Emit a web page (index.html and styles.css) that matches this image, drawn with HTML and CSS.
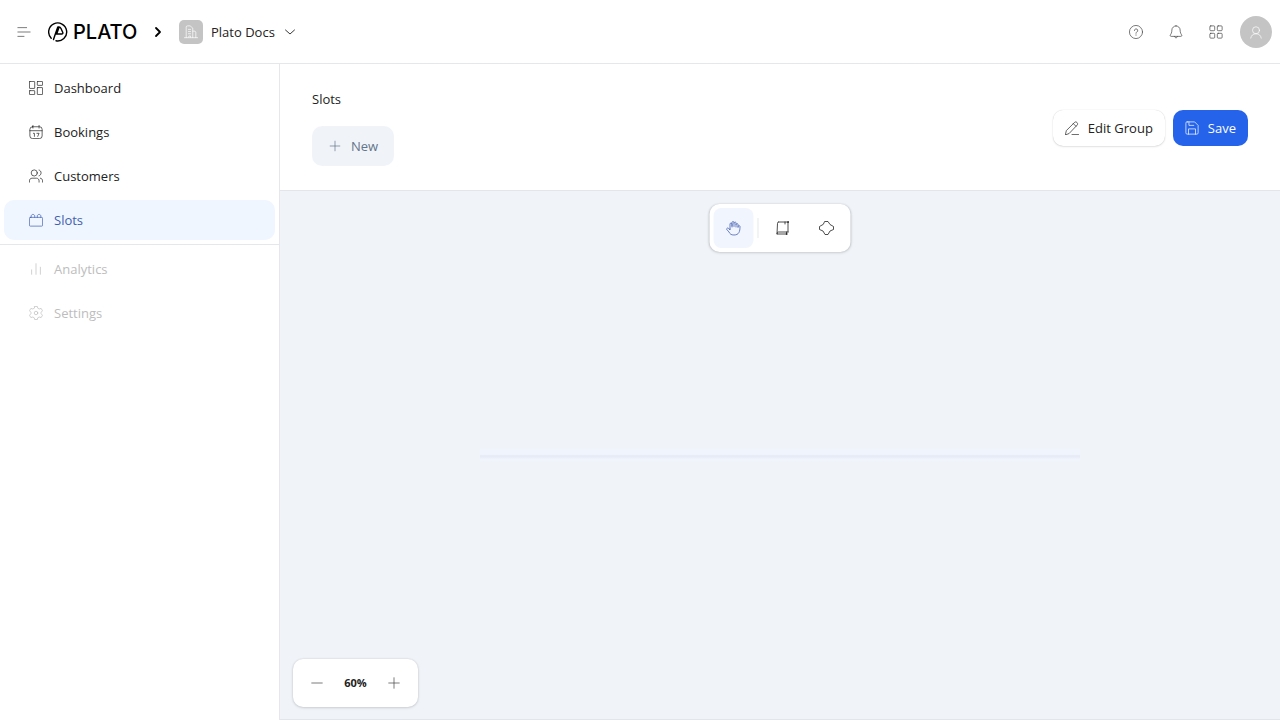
FILE: index.html
```html
<!DOCTYPE html>
<html lang="en">
<head>
<meta charset="utf-8">
<title>Plato - Slots</title>
<link rel="stylesheet" href="styles.css">
</head>
<body>

<header class="topbar">
	<button class="icon_btn" aria-label="Menu">
		<svg class="icon" viewBox="0 0 16 16"><path d="M1 3h10M1 8h14M1 13h7"/></svg>
	</button>
	<a class="brand" href="#">
		<svg class="brand_mark" viewBox="0 0 20 20"><path d="M3.200 16.200A9 9 0 1 1 8 18.800"/><path d="M5.500 17.500L7.500 11.500 9.800 5h1.200c1 0 1.500.5 2 1.500l1.800 4c.3 1-.2 1.500-1 1.500H7.500M11 5.500L9 11"/></svg>
		<span class="brand_name">PLATO</span>
	</a>
	<svg class="crumb" viewBox="0 0 8 12"><path d="M2 2L6 6l-4 4"/></svg>
	<button class="workspace">
		<span class="workspace_logo"><svg class="icon" viewBox="0 0 16 16"><path d="M.5 14.500h15M2.500 14.500V2.500c0-1 .5-1.500 1.500-1.500h3l3 2.500v11M10 7h2.500l1 1v6.500M5 5h2.500M5 7.500h2.500M5 10h2.500M5.500 14v-1.500h2V14"/></svg></span>
		Plato Docs
		<svg class="chevron" viewBox="0 0 12 8"><path d="M1.500 2L6 6l4.500-4"/></svg>
	</button>
	<div class="topbar_right">
		<button class="icon_btn" aria-label="Help">
			<svg class="icon" viewBox="0 0 16 16"><circle cx="8" cy="8" r="7.500"/><path d="M6.200 6.300a1.900 1.900 0 1 1 2.800 1.700c-.7.400-1 .7-1 1.500M8 11.200v.5"/></svg>
		</button>
		<button class="icon_btn" aria-label="Notifications">
			<svg class="icon" viewBox="0 0 16 16"><path d="M8 1a4.700 4.700 0 0 0-4.700 4.700c0 3.300-1.100 4.600-2 6 0 .9.400 1.300 1.200 1.300h11c.8 0 1.200-.4 1.200-1.300-.9-1.400-2-2.700-2-6A4.700 4.700 0 0 0 8 1zM6.300 13c.2 2.300 3.200 2.300 3.400 0"/></svg>
		</button>
		<button class="icon_btn" aria-label="Apps">
			<svg class="icon" viewBox="0 0 16 16"><rect x="1" y="1" width="5.500" height="5.500" rx="1"/><rect x="9.500" y="1" width="5.500" height="5.500" rx="1"/><rect x="1" y="9.500" width="5.500" height="5.500" rx="1"/><rect x="9.500" y="9.500" width="5.500" height="5.500" rx="1"/></svg>
		</button>
		<button class="avatar" aria-label="Account">
			<svg class="icon" viewBox="0 0 16 16"><circle cx="8" cy="6" r="4"/><path d="M2 15c.5-3 2.500-5 6-5s5.500 2 6 5"/></svg>
		</button>
	</div>
</header>

<div class="layout">
	<nav class="sidebar">
		<div class="nav_group">
			<a class="nav_item" href="#">
				<svg class="icon" viewBox="0 0 16 16"><rect x=".5" y=".5" width="6" height="8" rx=".5"/><rect x="9.500" y=".5" width="6" height="4.500" rx=".5"/><rect x=".5" y="11" width="6" height="4.500" rx=".5"/><rect x="9.500" y="7.500" width="6" height="8" rx=".5"/></svg>
				Dashboard
			</a>
			<a class="nav_item" href="#">
				<svg class="icon" viewBox="0 0 16 16"><rect x="1" y="2" width="14" height="13.500" rx="3"/><path d="M1 6.500h14M4.500 .5v3M11.500 .5v3M5 9.500h1.200v3.500M9 9.500h2.500l-1.500 3.500"/></svg>
				Bookings
			</a>
			<a class="nav_item" href="#">
				<svg class="icon" viewBox="0 0 16 16"><circle cx="6" cy="4.500" r="3.500"/><path d="M.5 15v-1.500c0-1.500 1-3 3-3h5c2 0 3 1.500 3 3V15M11.500 1.200c3.200.5 3.200 6 0 6.600M13 10.500c1.700.3 2.500 1.500 2.500 3V15"/></svg>
				Customers
			</a>
			<a class="nav_item active" href="#">
				<svg class="icon" viewBox="0 0 16 16"><rect x=".5" y="5" width="15" height="10" rx="1"/><path d="M2.500 5V3.500c0-2.500 4-2.500 4 0V5M9.500 5V3.500c0-2.500 4-2.500 4 0V5"/></svg>
				Slots
			</a>
		</div>
		<div class="nav_group">
			<a class="nav_item disabled" href="#">
				<svg class="icon" viewBox="0 0 16 16"><path d="M3 14V9M8 14V2M13 14V6"/></svg>
				Analytics
			</a>
			<a class="nav_item disabled" href="#">
				<svg class="icon" viewBox="0 0 16 16"><path d="M6.500 .5h3l.5 2 1.600.9 2.300-.6 1.500 2.600L13.800 7.300v1.400l1.600 1.900-1.500 2.600-2.300-.6-1.600.9-.5 2h-3L6 13.500l-1.600-.9-2.300.6L.6 10.600l1.600-1.900V7.300L.6 5.400l1.500-2.600 2.300.6L6 2.500z"/><circle cx="8" cy="8" r="2"/></svg>
				Settings
			</a>
		</div>
	</nav>

	<main class="content">
		<section class="page_head">
			<div class="page_title">
				<h1>Slots</h1>
				<button class="btn_new">
					<svg class="icon" viewBox="0 0 16 16"><path d="M8 2.500v11M2.500 8h11"/></svg>
					New
				</button>
			</div>
			<div class="actions">
				<button class="btn">
					<svg class="icon" viewBox="0 0 16 16"><path d="M.5 15.500l1-4.500 9.500-9.500c1.500-1.500 4.500 1 3 3L5 14zM9.500 3l3 3M8 15.500h7.500"/></svg>
					Edit Group
				</button>
				<button class="btn primary">
					<svg class="icon" viewBox="0 0 16 16"><path d="M2.500 1h8.500L15 5v8.500c0 1-.5 1.500-1.500 1.500h-11C1.500 15 1 14.500 1 13.500v-11C1 1.500 1.500 1 2.500 1zM4.500 1v4H10M4 15V9h8v6"/></svg>
					Save
				</button>
			</div>
		</section>

		<section class="canvas">
			<div class="slot_line"></div>
			<div class="panel tools">
				<button class="tool selected" aria-label="Pan">
					<svg class="icon large" viewBox="0 0 16 16"><path d="M4.500 9V4c0-1.300 2-1.300 2 0v3M6.500 6V2.500c0-1.300 2-1.300 2 0V6.500M8.500 3c0-1.300 2-1.300 2 0v4M10.500 4.500c0-1.300 2-1.300 2 0v3M12.500 6.500c0-1.200 2-1.200 2 0 0 5-1 8.500-6 8.500-3 0-4-1-5-3L1.300 9.500C.8 8 2.500 7.500 3.200 8.500L4.500 10V9"/></svg>
				</button>
				<span class="tools_sep"></span>
				<button class="tool" aria-label="Rectangle">
					<svg class="icon large" viewBox="0 0 16 16"><path d="M4 2h9.500v10M4 2c-.8 0-1 .7-1 1.500L2.500 14H12M2.500 14c0-1.500.5-2 1.500-2h9.500M10.500 2v2M12 12v2"/><circle cx="13.500" cy="2" r=".5"/><circle cx="12" cy="14" r=".5"/></svg>
				</button>
				<button class="tool" aria-label="Polygon">
					<svg class="icon large" viewBox="0 0 16 16"><path d="M6.500 1.500h3L11.500 4.500 15 6.500v3L11.500 11l-2 3.500h-3L4.500 11 1 9.500v-3L4.500 4.500z"/></svg>
				</button>
			</div>
			<div class="panel zoom">
				<button class="tool muted" aria-label="Zoom out">
					<svg class="icon" viewBox="0 0 16 16"><path d="M2 8h12"/></svg>
				</button>
				<span class="zoom_value">60%</span>
				<button class="tool muted" aria-label="Zoom in">
					<svg class="icon" viewBox="0 0 16 16"><path d="M8 2v12M2 8h12"/></svg>
				</button>
			</div>
		</section>
	</main>
</div>

</body>
</html>
```
FILE: styles.css
```css
* {
	box-sizing: border-box;
}
body {
	margin: 0;
	min-height: 100vh;
	display: flex;
	flex-direction: column;
	font-family: "Open Sans", sans-serif;
	font-size: 13px;
	line-height: 20px;
	color: #222;
	background: #fff;
}
a {
	color: inherit;
	text-decoration: none;
}
button {
	display: flex;
	align-items: center;
	justify-content: center;
	padding: 0;
	border: 0;
	background: none;
	font: inherit;
	color: inherit;
	cursor: pointer;
}
svg {
	flex: none;
	fill: none;
	stroke: currentColor;
	stroke-linecap: round;
	stroke-linejoin: round;
}
.icon {
	width: 14px;
	height: 14px;
	stroke-width: 0.8;
}
.icon.large {
	width: 16px;
	height: 16px;
}

/* top bar */
.topbar {
	display: flex;
	align-items: center;
	height: 64px;
	padding: 0 8px 0 4px;
	border-bottom: 1px solid #e5e7eb;
}
.icon_btn {
	width: 40px;
	height: 40px;
	color: #444;
}
.brand {
	display: flex;
	align-items: center;
	gap: 5px;
	margin-left: 4px;
	width: 96px;
	color: #000;
}
.brand_mark {
	width: 20px;
	height: 20px;
	stroke-width: 1.4;
}
.brand_name {
	font-family: Inter, sans-serif;
	font-size: 20px;
	font-weight: 500;
}
.crumb {
	width: 8px;
	height: 12px;
	margin-left: 10px;
	color: #000;
	stroke-width: 1.8;
}
.workspace {
	gap: 8px;
	margin-left: 17px;
}
.workspace_logo {
	display: flex;
	align-items: center;
	justify-content: center;
	width: 24px;
	height: 24px;
	border-radius: 5px;
	background: #c4c4c4;
	color: #fff;
}
.chevron {
	width: 12px;
	height: 8px;
	margin-left: 1px;
	stroke-width: 0.9;
}
.topbar_right {
	display: flex;
	align-items: center;
	margin-left: auto;
}
.avatar {
	width: 32px;
	height: 32px;
	margin-left: 4px;
	border-radius: 50%;
	background: #c4c4c4;
	color: #fff;
}

/* sidebar */
.layout {
	flex: 1;
	display: flex;
}
.sidebar {
	flex: none;
	width: 280px;
	border-right: 1px solid #e5e7eb;
}
.nav_group {
	display: flex;
	flex-direction: column;
	gap: 4px;
	padding: 4px;
}
.nav_group + .nav_group {
	border-top: 1px solid #e5e7eb;
}
.nav_item {
	display: flex;
	align-items: center;
	gap: 11px;
	height: 40px;
	padding: 0 25px;
	border-radius: 10px;
}
.nav_item.active {
	background: #eff6ff;
	color: #3f5fb0;
}
.nav_item.disabled {
	color: #bdbdbd;
}

/* page head */
.content {
	flex: 1;
	display: flex;
	flex-direction: column;
}
.page_head {
	display: flex;
	align-items: center;
	justify-content: space-between;
	padding: 25px 32px 24px;
	border-bottom: 1px solid #e2e6eb;
}
.page_title h1 {
	margin: 0 0 17px;
	font-size: 13px;
	font-weight: 400;
	line-height: 20px;
}
.btn_new {
	gap: 9px;
	height: 40px;
	padding: 0 16px;
	border-radius: 10px;
	background: #f0f4f9;
	color: #64748b;
}
.actions {
	display: flex;
	gap: 8px;
}
.btn {
	gap: 9px;
	height: 36px;
	padding: 0 12px;
	border-radius: 10px;
	background: #fff;
	box-shadow: 0 0 1px rgba(0,0,0,0.2), 0 1px 2px rgba(0,0,0,0.1);
}
.btn.primary {
	background: #2563eb;
	color: #fff;
	box-shadow: none;
}

/* drawing area */
.canvas {
	position: relative;
	flex: 1;
	display: flex;
	align-items: center;
	justify-content: center;
	background: #f0f4f9;
	border-bottom: 1px solid #e2e6eb;
}
.slot_line {
	width: 60%;
	height: 12px;
	background: linear-gradient(#f0f4fc 45%, #e6ebf6 55%, #e6ebf6 65%, #f0f4fc 85%);
}
.panel {
	position: absolute;
	display: flex;
	align-items: center;
	padding: 4px;
	border-radius: 10px;
	background: #fff;
	box-shadow: 0 0 2px rgba(0,0,0,0.15), 0 1px 3px rgba(0,0,0,0.12);
}
.tools {
	top: 13px;
	left: 50%;
	transform: translateX(-50%);
	gap: 4px;
}
.tool {
	width: 40px;
	height: 40px;
	border-radius: 8px;
}
.tool.selected {
	background: #f1f5fd;
	color: #4a63b5;
}
.tool.muted {
	color: #444;
}
.tools_sep {
	width: 1px;
	height: 20px;
	background: #e5e7eb;
}
.zoom {
	left: 13px;
	bottom: 12px;
}
.zoom_value {
	width: 37px;
	text-align: center;
	font-size: 11px;
	font-weight: 700;
}
```
